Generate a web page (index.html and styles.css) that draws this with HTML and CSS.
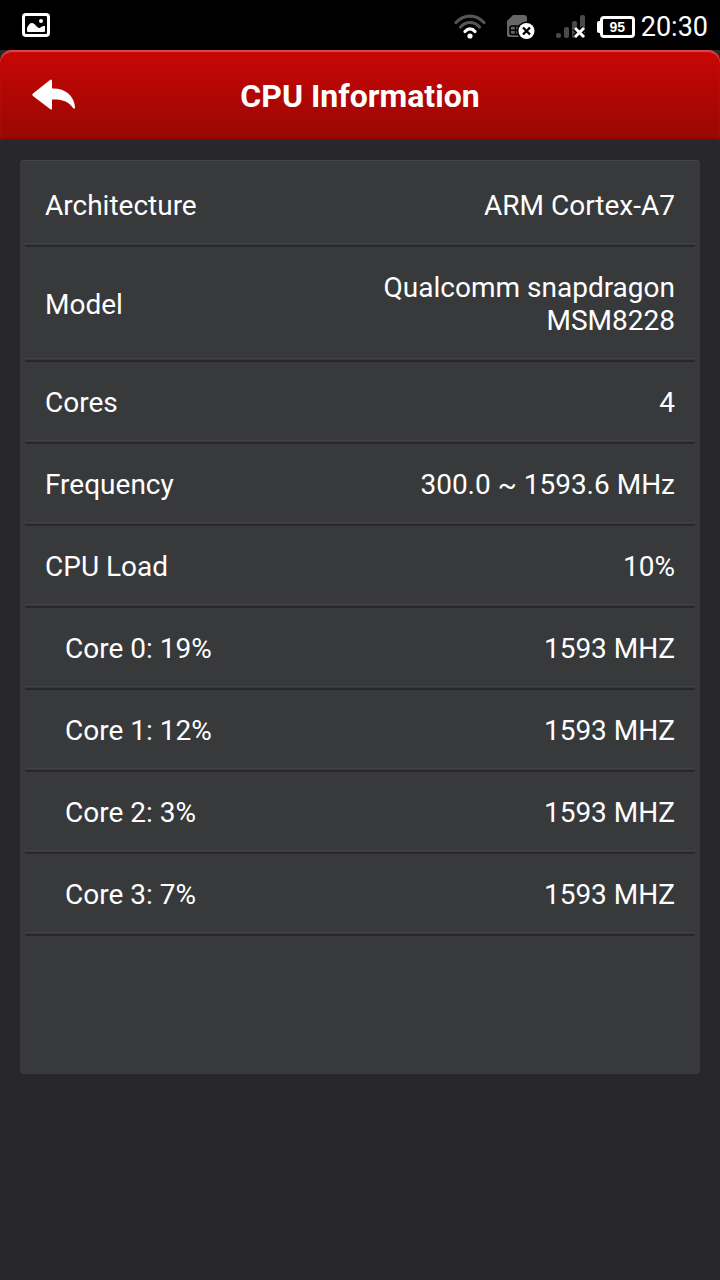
FILE: index.html
```
<!DOCTYPE html>
<html lang="en">
<head>
    <meta charset="UTF-8">
    <meta name="viewport" content="width=device-width, initial-scale=1.0">
    <title>CPU Information</title>
    <link rel="stylesheet" href="styles.css">
</head>
<body>
    <div class="status-bar">
        <svg class="icon-picture" width="28" height="24" viewBox="0 0 28 24">
            <rect x="1.5" y="1.5" width="25" height="21" rx="2.5" fill="none" stroke="#fff" stroke-width="3"/>
            <path d="M5 18v-3c1-3 3-5 5-5 3 0 4 4 7 5 2 0 2-2 6-2v5q0 1-1 1H6q-1 0-1-1z" fill="#fff"/>
            <circle cx="19" cy="8" r="2" fill="#fff"/>
        </svg>
        <div class="status-right">
            <svg class="icon-wifi" width="32" height="26" viewBox="0 0 32 26" fill="none" stroke-width="3.2" stroke-linecap="round">
                <path d="M2 8.500C10 0 22 0 30 8.500" stroke="#555"/>
                <path d="M6.500 13C12 7 20 7 25.500 13" stroke="#555"/>
                <path d="M11 17.500c3-3.400 7-3.400 10 0" stroke="#fff"/>
                <circle cx="16" cy="22" r="2.600" fill="#fff"/>
            </svg>
            <svg class="icon-sim" width="30" height="26" viewBox="0 0 30 26">
                <path d="M1 21V7l6-6h11q3 0 3 3v19H3q-2 0-2-2z" fill="#666"/>
                <rect x="4" y="12" width="12" height="8.500" rx="2" fill="#666" stroke="#000" stroke-width="1.600"/>
                <path d="M4 16.200h10M9.500 12v8.500" stroke="#000" stroke-width="1.400"/>
                <circle cx="20.500" cy="17" r="9.500" fill="#000"/>
                <circle cx="20.500" cy="17" r="8" fill="#fff"/>
                <path d="M17 13.500l7 7m0-7l-7 7" stroke="#000" stroke-width="2.400"/>
            </svg>
            <svg class="icon-signal" width="30" height="26" viewBox="0 0 30 26">
                <g fill="#4a4a4a">
                    <rect x="0" y="19" width="5" height="5" rx="2"/>
                    <rect x="8" y="13" width="5" height="11" rx="2"/>
                    <rect x="16" y="7" width="5" height="17" rx="2"/>
                    <rect x="24" y="1" width="5" height="23" rx="2"/>
                </g>
                <path d="M19 14l9 9m0-9l-9 9" stroke="#000" stroke-width="6"/>
                <path d="M19 14l9 9m0-9l-9 9" stroke="#fff" stroke-width="3"/>
            </svg>
            <div class="battery">95</div>
            <div class="time">20:30</div>
        </div>
    </div>
    <div class="header-wrap">
        <header>
            <button class="back" type="button" aria-label="Back">
                <svg width="44" height="32" viewBox="0 0 44 32">
                    <path d="M1 14.500L18 1q2-1.500 2 1v7.500c13-.5 22 7 23 18.500q0 3-2 1c-4-6.500-11-9-21-8.500V29q0 3-2 1L1 17q-1.500-1.200 0-2.500z" fill="#fff"/>
                </svg>
            </button>
            <h1>CPU Information</h1>
        </header>
    </div>
    <main>
        <div class="card">
            <table>
                <tr><th scope="row">Architecture</th><td>ARM Cortex-A7</td></tr>
                <tr><th scope="row">Model</th><td>Qualcomm snapdragon MSM8228</td></tr>
                <tr><th scope="row">Cores</th><td>4</td></tr>
                <tr><th scope="row">Frequency</th><td>300.0 ~ 1593.6 MHz</td></tr>
                <tr><th scope="row">CPU Load</th><td>10%</td></tr>
                <tr class="core"><th scope="row">Core 0: 19%</th><td>1593 MHZ</td></tr>
                <tr class="core"><th scope="row">Core 1: 12%</th><td>1593 MHZ</td></tr>
                <tr class="core"><th scope="row">Core 2: 3%</th><td>1593 MHZ</td></tr>
                <tr class="core"><th scope="row">Core 3: 7%</th><td>1593 MHZ</td></tr>
            </table>
        </div>
    </main>
</body>
</html>
```
FILE: styles.css
```
* {
    box-sizing: border-box;
}
body {
    margin: 0;
    min-height: 100vh;
    font-family: Roboto, sans-serif;
    color: #fff;
    background: #28282a;
}
.status-bar {
    display: flex;
    align-items: center;
    justify-content: space-between;
    height: 50px;
    padding: 0 12px 0 22px;
    background: #000;
}
.status-right {
    display: flex;
    align-items: center;
    padding-top: 3px;
}
.icon-sim {
    margin-left: 20px;
}
.icon-signal {
    margin-left: 20px;
}
.battery {
    position: relative;
    width: 35px;
    height: 22px;
    margin-left: 14px;
    border: 3px solid #fff;
    border-radius: 4px;
    font: bold 14px/16px "Liberation Sans", sans-serif;
    text-align: center;
}
.battery::before {
    content: "";
    position: absolute;
    left: -6px;
    top: 2px;
    width: 4px;
    height: 12px;
    border-radius: 2px 0 0 2px;
    background: #fff;
}
.time {
    margin-left: 6px;
    font-size: 27px;
    line-height: 32px;
}
.header-wrap {
    background: #28282a;
}
header {
    display: grid;
    grid-template-columns: 108px 1fr 108px;
    align-items: center;
    height: 90px;
    border-radius: 12px 12px 0 0;
    background: linear-gradient(#c90606, #980802);
    box-shadow: inset 0 2px 1px #d94a4a, inset 0 -2px 1px #860703;
}
.back {
    height: 90px;
    padding: 0;
    border: 0;
    background: none;
}
.back svg {
    display: block;
    margin: 0 auto;
}
h1 {
    margin: 0;
    padding-top: 2px;
    font-size: 32px;
    line-height: 40px;
    font-weight: bold;
    text-align: center;
}
main {
    padding: 20px;
}
.card {
    padding: 5px 5px 138px;
    border-radius: 4px;
    background: #38393b;
    box-shadow: inset 0 1px #454547;
}
table {
    width: 100%;
    table-layout: fixed;
    border-spacing: 0;
    font-size: 28px;
    line-height: 33px;
}
th,
td {
    padding: 24px 20px 23px;
    border-bottom: 2px solid #28282a;
    /* highlight line just above the divider */
    box-shadow: inset 0 -1px #38393b, inset 0 -2px #424244;
    vertical-align: middle;
}
th {
    font-weight: normal;
    text-align: left;
}
td {
    text-align: right;
}
.core th {
    padding-left: 40px;
}
```
